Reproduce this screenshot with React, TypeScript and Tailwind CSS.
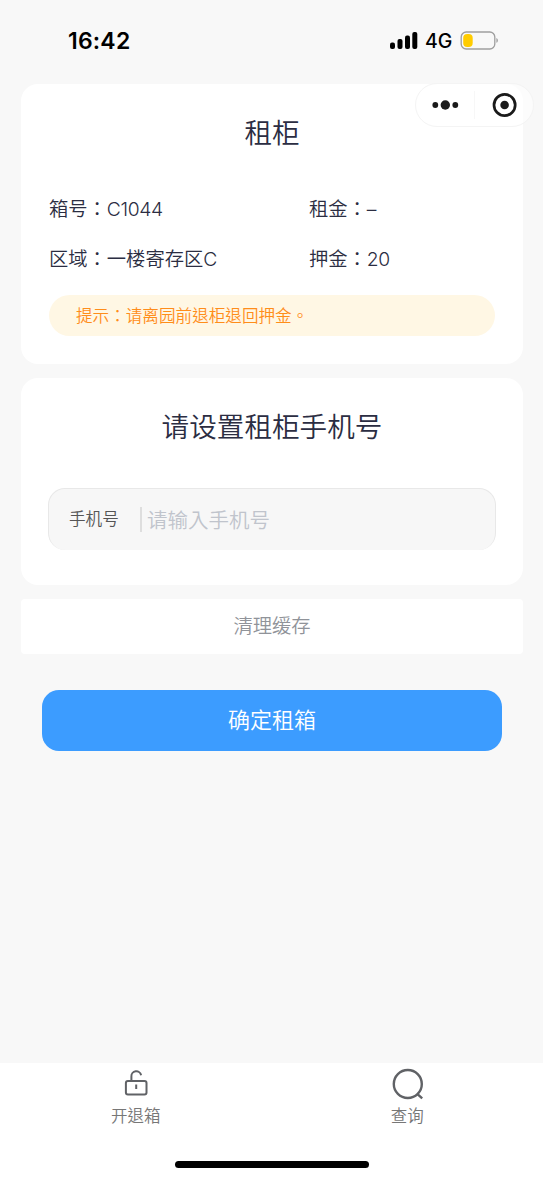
import type { ReactNode } from 'react';

const LOCKER = [
  { label: '箱号', value: 'C1044' },
  { label: '租金', value: '–' },
  { label: '区域', value: '一楼寄存区C' },
  { label: '押金', value: '20' },
];

function StatusBar() {
  return (
    <div className="flex h-[84px] shrink-0 items-start justify-between pr-[43px] pl-[68px] text-black">
      <span className="mt-[25px] text-[23px] leading-8 font-semibold tracking-[0.2px]">16:42</span>
      <div className="mt-[25px] flex h-8 items-center">
        <svg width="28" height="18" viewBox="0 0 28 18" fill="currentColor">
          <rect x="0" y="10.5" width="5" height="6.5" rx="2" />
          <rect x="7.5" y="7" width="5" height="10" rx="2" />
          <rect x="15" y="3.5" width="5" height="13.5" rx="2" />
          <rect x="22.3" y="0" width="5" height="17" rx="2" />
        </svg>
        <span className="ml-[7px] w-[28px] text-[19.5px] leading-8 font-[450] whitespace-nowrap">4G</span>
        <svg className="ml-[7px]" width="40" height="20" viewBox="0 0 40 20">
          <rect x="1.2" y="1" width="33.6" height="17" rx="5" fill="none" stroke="#9e9e9e" strokeWidth="1.3" />
          <rect x="3.2" y="3" width="9.5" height="13" rx="4" fill="#ffcc00" />
          <path d="M36.4 7c2 .8 2 4 0 4.8z" fill="#9e9e9e" />
        </svg>
      </div>
    </div>
  );
}

// mini program capsule, floats over the first card
function Capsule() {
  return (
    <div className="absolute top-[83px] left-[415px] flex h-[44px] w-[119px] items-center rounded-full border border-[#f4f4f4] bg-white/60 text-[#1a1a1a]">
      <svg className="ml-[15px]" width="28" height="12" viewBox="0 0 28 12" fill="currentColor">
        <circle cx="4.3" cy="6" r="2.9" />
        <circle cx="14.3" cy="6" r="4.7" />
        <circle cx="24.3" cy="6" r="2.9" />
      </svg>
      <span className="ml-[15px] h-[28px] w-px bg-[#f7f7f7]" />
      <svg className="ml-[17px]" width="26" height="26" viewBox="0 0 26 26">
        <circle cx="12.6" cy="13" r="10.6" fill="none" stroke="currentColor" strokeWidth="2.7" />
        <circle cx="12.6" cy="13" r="4.3" fill="currentColor" />
      </svg>
    </div>
  );
}

function Tab({ label, children }: { label: string; children: ReactNode }) {
  return (
    <button className="flex flex-1 flex-col items-center text-[#777]">
      <span className="flex h-[41px] items-center">{children}</span>
      <span className="text-[16.5px] leading-[25px]">{label}</span>
    </button>
  );
}

export default function App() {
  return (
    <div className="relative flex h-[1179px] w-[543px] flex-col overflow-hidden bg-[#f8f8f8] font-['Inter','Noto_Sans_CJK_TC',sans-serif] font-[350] text-[#2b2d42]">
      <StatusBar />
      <Capsule />

      <main className="flex flex-1 flex-col pr-5 pl-[21px]">
        <section className="h-[280px] rounded-[17px] bg-white px-7 pt-7">
          <h1 className="text-center text-[27.5px] leading-[42px]">租柜</h1>
          <div className="mt-[30px] grid grid-cols-[260px_1fr] text-[19.3px] leading-[51px]">
            {LOCKER.map((item) => (
              <div key={item.label} className="h-[50px] whitespace-nowrap">
                {item.label}：<span className={/^\w+$/.test(item.value) ? 'tracking-[-0.4px]' : ''}>{item.value}</span>
              </div>
            ))}
          </div>
          <p className="mt-[11px] h-[41px] rounded-full bg-[#fff7e4] pl-[27px] text-[16.6px] leading-[42px] text-[#ff8d1a]">
            提示：请离园前退柜退回押金。
          </p>
        </section>

        <section className="mt-[14px] h-[207px] rounded-[17px] bg-white px-[27px] pt-7">
          <h2 className="text-center text-[27.6px] leading-[42px]">请设置租柜手机号</h2>
          <label className="mt-[40px] flex h-[62px] items-center rounded-[17px] border border-b-0 border-[#e8e8e8] bg-[#f7f7f7]">
            <span className="ml-5 w-[71px] text-[16.6px] text-[#555]">手机号</span>
            <span className="h-[25px] w-[2px] bg-[#dedede]" />
            <input
              className="ml-[5px] w-[300px] bg-transparent pt-[3px] text-[20.5px] outline-none placeholder:text-[#c0c4cc]"
              placeholder="请输入手机号"
            />
          </label>
        </section>

        <button className="mt-[14px] h-[55px] rounded-[4px] bg-white text-[19.3px] text-[#909399]">清理缓存</button>
        <button className="mx-[21px] mt-[36px] h-[61px] rounded-[17px] bg-[#3c9cff] text-[22px] text-white">
          确定租箱
        </button>
      </main>

      <nav className="flex h-[116px] shrink-0 bg-white">
        <Tab label="开退箱">
          <svg width="26" height="28" viewBox="0 0 26 28" fill="none" stroke="#606266" strokeWidth="2">
            <rect x="2.9" y="11" width="20.6" height="13.4" rx="2" />
            <path d="M8.4 11V6.6a4.9 4.9 0 0 1 9.7-1.3M13.2 14.5v4.5" />
          </svg>
        </Tab>
        <Tab label="查询">
          <svg width="34" height="34" viewBox="0 0 34 34" fill="none" stroke="#606266" strokeWidth="2.4">
            <circle cx="17.8" cy="17" r="14" />
            <path d="M27.2 26.8l5 4.6" />
          </svg>
        </Tab>
      </nav>
      <div className="absolute bottom-[11px] left-[175px] h-[7px] w-[194px] rounded-full bg-black" />
    </div>
  );
}
